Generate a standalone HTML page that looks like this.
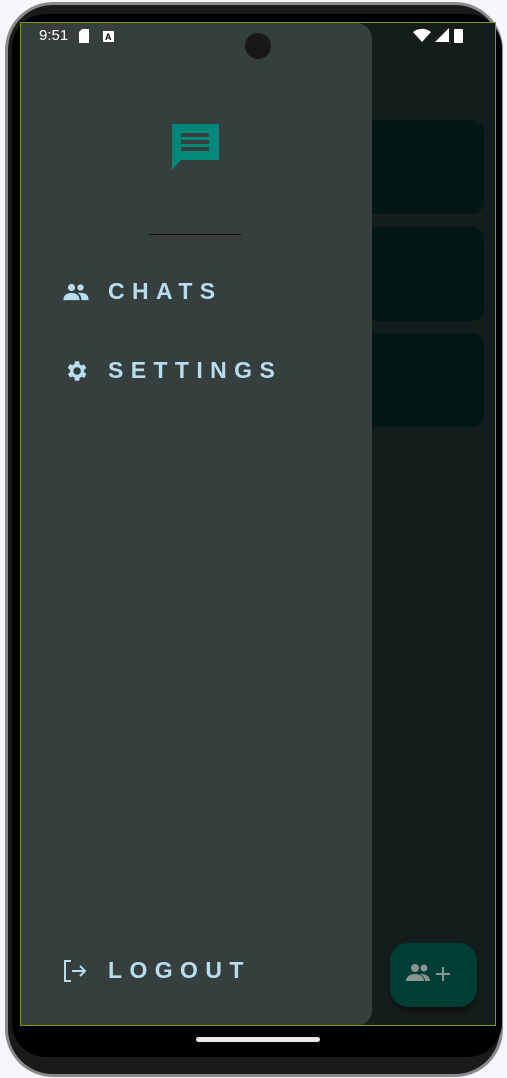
<!DOCTYPE html>
<html><head><style>
*{margin:0;padding:0;box-sizing:border-box}
body{width:507px;height:1078px;background:#f4f6fb;position:relative;overflow:hidden;font-family:"Liberation Sans",sans-serif}
.bezel{position:absolute;left:5px;top:2px;width:498px;height:1075px;border-radius:48px;background:#1a1a1a;border:3px solid #8a8a8a}
.screenbg{position:absolute;left:12px;top:14px;width:490px;height:1043px;background:#000;border-radius:34px}
.screen{position:absolute;left:20px;top:22px;width:476px;height:1004px;background:#151d1c;border:1px solid #7a9a00;overflow:hidden}
.card{position:absolute;left:10px;width:453px;height:94px;background:#021716;border-radius:12px}
.drawer{position:absolute;left:0;top:0;width:351px;height:1003px;background:#373f3e;border-radius:0 16px 16px 0}
.item{position:absolute;left:42px;display:flex;align-items:center;color:#b6deef;font-weight:bold;font-size:23px;letter-spacing:7.4px}
.item svg{margin-right:19px}
.fab{position:absolute;left:369px;top:920px;width:87px;height:64px;background:#003d33;border-radius:18px;box-shadow:0 4px 3px rgba(0,0,0,.4)}
.status{position:absolute;top:4px;color:#fff;font-size:15px}
</style></head><body>
<div class="bezel"></div>
<div class="screenbg"></div>
<div class="screen">
 <div class="card" style="top:97px"></div>
 <div class="card" style="top:204px"></div>
 <div class="card" style="top:310px"></div>
 <div class="fab"><svg width="87" height="64" viewBox="0 0 87 64"><circle cx="25" cy="25" r="4" fill="#8a9592"/><circle cx="34" cy="25" r="3.5" fill="#8a9592"/><path d="M16 38c0-5 5-7 9-7s9 2 9 7z M30 31c4 0 10 1 10 7h-5c0-3-2-5-5-7z" fill="#8a9592"/><path d="M46 31h14M53 24v14" stroke="#8a9592" stroke-width="2"/></svg></div>
 <div class="drawer">
  <svg style="position:absolute;left:151px;top:101px" width="47" height="47" viewBox="0 0 47 47"><path d="M0 0h47v36H9L0 46z" fill="#00897b"/><rect x="9" y="9" width="28" height="4" fill="#373f3e"/><rect x="9" y="16" width="28" height="4" fill="#373f3e"/><rect x="9" y="23" width="28" height="4" fill="#373f3e"/></svg>
  <div style="position:absolute;left:128px;top:211px;width:92px;height:1px;background:#111"></div>
  <div class="item" style="top:255px"><svg width="26" height="18" viewBox="0 0 28 20"><circle cx="9" cy="5" r="4" fill="#b6deef"/><circle cx="19" cy="5" r="3.5" fill="#b6deef"/><path d="M0 19c0-6 5-8 9-8s9 2 9 8z M19 11c4 0 9 1 9 8h-8c0-3-1-6-4-8z" fill="#b6deef"/></svg>CHATS</div>
  <div class="item" style="top:334px"><svg width="26" height="26" viewBox="0 0 24 24"><path fill="#b6deef" d="M19.4 13a7.5 7.5 0 0 0 0-2l2.1-1.6-2-3.5-2.5 1a7 7 0 0 0-1.7-1L15 3h-4l-.4 2.7a7 7 0 0 0-1.7 1l-2.5-1-2 3.5L6.6 11a7.5 7.5 0 0 0 0 2l-2.1 1.6 2 3.5 2.5-1a7 7 0 0 0 1.7 1L11 21h4l.4-2.7a7 7 0 0 0 1.7-1l2.5 1 2-3.5zM13 15.5a3.5 3.5 0 1 1 0-7 3.5 3.5 0 0 1 0 7z"/></svg>SETTINGS</div>
  <div class="item" style="top:934px"><svg width="26" height="24" viewBox="0 0 26 24"><path d="M8 2H2v20h6M9 12h13M17 7l5 5-5 5" stroke="#b6deef" stroke-width="2" fill="none"/></svg>LOGOUT</div>
 </div>
 <div class="status" style="left:18px">9:51</div>
 <svg style="position:absolute;left:56px;top:6px" width="40" height="14"><path d="M2 3l3-3h7v14H2z" fill="#fff"/><rect x="26" y="2" width="11" height="11" fill="#fff"/><text x="28" y="11" font-size="9" font-weight="bold" fill="#000" font-family="Liberation Sans">A</text></svg>
 <svg style="position:absolute;left:392px;top:5px" width="54" height="16"><path d="M0 4a14 14 0 0 1 18 0l-9 10z" fill="#fff"/><path d="M22 14h14V0z" fill="#fff"/><rect x="41" y="1" width="9" height="14" rx="1" fill="#fff"/></svg>
 <div style="position:absolute;left:224px;top:10px;width:26px;height:26px;border-radius:50%;background:#181818"></div>
</div>
<div style="position:absolute;left:196px;top:1037px;width:124px;height:5px;border-radius:3px;background:#e8e8e8"></div>
</body></html>
